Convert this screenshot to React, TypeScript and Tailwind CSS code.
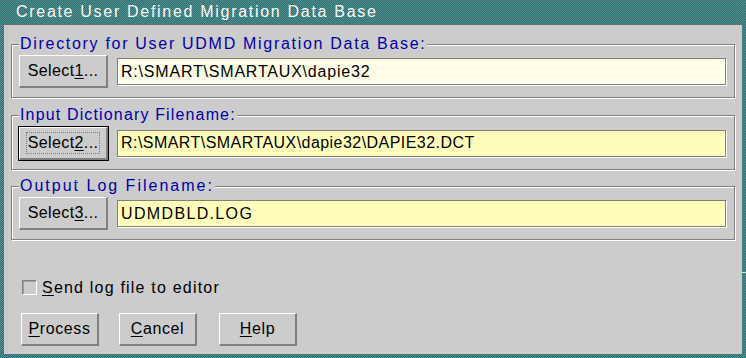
import React from "react";

const btn =
  "h-[33px] bg-[#cccccc] border-t border-l border-white border-b-2 border-r-2 border-b-[#808080] border-r-[#808080] flex items-center justify-center text-black text-[16px] leading-[18px] shrink-0 whitespace-nowrap";

function Field({ text, bright, track }: { text: string; bright?: boolean; track: string }) {
  return (
    <div
      className={
        "flex-1 h-[27px] border border-[#808080] shadow-[1px_1px_0_#ffffff] flex items-center pl-[3px] text-black text-[16px] leading-[18px] whitespace-nowrap " +
        track +
        " " +
        (bright
          ? "bg-[repeating-conic-gradient(#ffffd0_0_25%,#ffffa8_0_50%)] bg-[length:2px_2px]"
          : "bg-[repeating-conic-gradient(#ffffff_0_25%,#ffffd8_0_50%)] bg-[length:2px_2px]")
      }
    >
      {text}
    </div>
  );
}

function Group({
  label,
  children,
  className,
  track,
}: {
  label: string;
  children: React.ReactNode;
  className: string;
  track: string;
}) {
  return (
    <div
      className={
        "border border-[#808080] shadow-[inset_1px_1px_0_#ffffff,1px_1px_0_#ffffff] pl-[7px] pr-[8px] pb-[9px] flex flex-col " +
        className
      }
    >
      <div
        className={
          "-mt-[10px] w-fit px-[1px] bg-[#cccccc] text-[#0000aa] text-[16px] leading-[18px] whitespace-nowrap " +
          track
        }
      >
        {label}
      </div>
      <div className="mt-[2px] flex items-center gap-[9px]">{children}</div>
    </div>
  );
}

export default function App() {
  return (
    <div className="relative w-[746px] h-[358px] flex flex-col bg-[repeating-conic-gradient(#008080_0_25%,#808080_0_50%)] bg-[length:2px_2px] px-[4px] pb-[4px] font-['Liberation_Sans',Arial,sans-serif] overflow-hidden">
      <div className="h-[25px] shrink-0 pl-[12px] pt-[3px] text-white text-[16px] leading-[18px] tracking-[1.7px] whitespace-nowrap">
        Create User Defined Migration Data Base
      </div>
      <div className="flex-1 bg-[#cccccc] flex flex-col px-[7px]">
        <Group
          label="Directory for User UDMD Migration Data Base:"
          className="mt-[19px]"
          track="tracking-[1.7px]"
        >
          <div className={btn + " w-[89px] tracking-[0.4px]"}>
            <span>
              Select<u className="underline-offset-2">1</u>...
            </span>
          </div>
          <Field text="R:\SMART\SMARTAUX\dapie32" track="tracking-[0.8px]" />
        </Group>
        <Group label="Input Dictionary Filename:" className="mt-[17px]" track="tracking-[1.15px]">
          <div className={btn + " w-[89px] outline outline-1 outline-black mt-[1px] tracking-[0.4px]"}>
            <span className="border border-dotted border-[#808080] px-[1px] leading-[20px]">
              Select<u className="underline-offset-2">2</u>...
            </span>
          </div>
          <Field text="R:\SMART\SMARTAUX\dapie32\DAPIE32.DCT" bright track="tracking-[0.45px]" />
        </Group>
        <Group label="Output Log Filename:" className="mt-[16px]" track="tracking-[2px]">
          <div className={btn + " w-[89px] tracking-[0.4px]"}>
            <span>
              Select<u className="underline-offset-2">3</u>...
            </span>
          </div>
          <Field text="UDMDBLD.LOG" bright track="tracking-[1.35px]" />
        </Group>

        <div className="mt-[40px] ml-[11px] flex items-center h-[15px]">
          <div className="w-[15px] h-[15px] border-t border-l border-[#808080] border-b border-r border-b-white border-r-white bg-[#cccccc] shadow-[inset_1px_1px_0_#a0a0a0]" />
          <div className="ml-[5px] text-black text-[16px] leading-[18px] tracking-[1.2px] whitespace-nowrap">
            <u className="underline-offset-2">S</u>end log file to editor
          </div>
        </div>

        <div className="mt-[18px] ml-[10px] flex">
          <div className={btn + " w-[78px] h-[32px] tracking-[0.6px]"}>
            <span>
              <u className="underline-offset-2">P</u>rocess
            </span>
          </div>
          <div className={btn + " w-[78px] h-[32px] ml-[20px] tracking-[0.6px]"}>
            <span>
              <u className="underline-offset-2">C</u>ancel
            </span>
          </div>
          <div className={btn + " w-[78px] h-[32px] ml-[22px] tracking-[0.6px]"}>
            <span>
              <u className="underline-offset-2">H</u>elp
            </span>
          </div>
        </div>
      </div>
      <div className="absolute left-[742px] top-[272px] w-[4px] h-[1px] bg-[#e0e0e0]" />
    </div>
  );
}
